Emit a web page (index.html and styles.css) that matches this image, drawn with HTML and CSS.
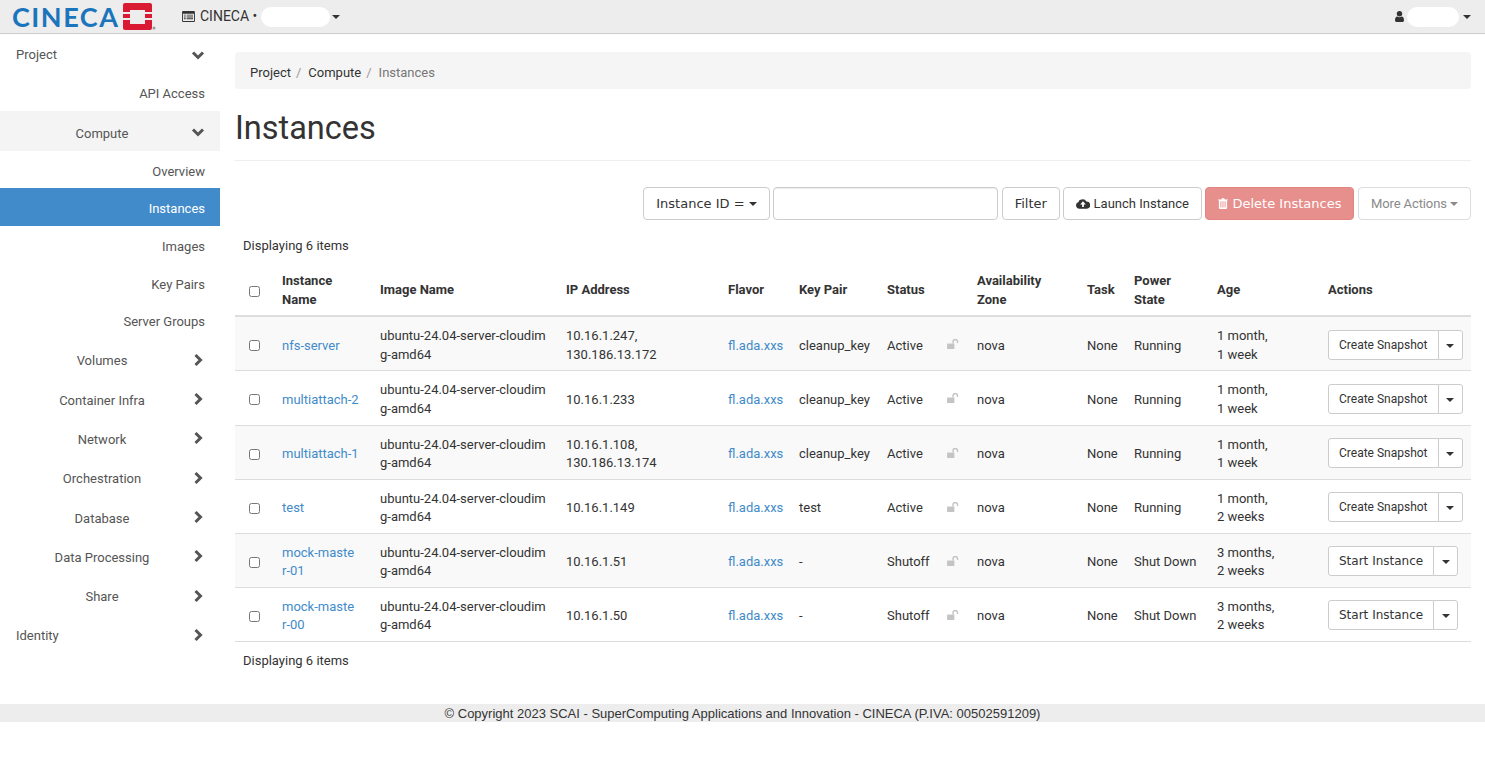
FILE: index.html
```html
<!DOCTYPE html>
<html lang="en">

<head>
    <meta charset="UTF-8">
    <title>Instances - OpenStack Dashboard</title>
    <link rel="stylesheet" href="styles.css">
</head>

<body>

    <nav class="topbar">
        <a class="brand" href="#">
            <span class="brand-name">CINECA</span>
            <svg class="brand-mark" viewBox="0 0 33 28" width="33" height="28">
                <path fill="#da1a32" d="M2 0h25a2 2 0 0 1 2 2v7h-7V7H7v2H0V2a2 2 0 0 1 2-2z" />
                <path fill="#da1a32" d="M0 17h7v4h15v-4h7v8a2 2 0 0 1-2 2H2a2 2 0 0 1-2-2z" />
                <rect fill="#da1a32" x="0" y="11" width="7" height="4" />
                <rect fill="#da1a32" x="22" y="11" width="7" height="4" />
                <circle fill="#999" cx="31" cy="25" r="1.500" />
            </svg>
        </a>
        <div class="project-menu">
            <svg class="icon" viewBox="0 0 14 12" width="13" height="11">
                <path fill="#333" d="M1 0h12a1 1 0 0 1 1 1v10a1 1 0 0 1-1 1H1a1 1 0 0 1-1-1V1a1 1 0 0 1 1-1zm0 3v8h12V3zm1 1h2v1H2zm3 0h7v1H5zM2 6h2v1H2zm3 0h7v1H5zM2 8h2v1H2zm3 0h7v1H5z" />
            </svg>
            <span class="project-label">CINECA &bull;</span>
            <span class="redacted project-name"></span>
            <span class="caret"></span>
        </div>
        <div class="user-menu">
            <svg class="icon" viewBox="0 0 10 12" width="9" height="11">
                <circle cx="5" cy="3" r="3" fill="#333" />
                <path fill="#333" d="M0 10.500C0 7.500 1 6 2.600 6c.6.5 1.400.8 2.400.8S6.800 6.500 7.400 6C9 6 10 7.500 10 10.500 10 11.500 9.300 12 8.500 12h-7C.7 12 0 11.500 0 10.500z" />
            </svg>
            <span class="redacted user-name"></span>
            <span class="caret"></span>
        </div>
    </nav>

    <div class="page">
        <aside class="sidebar">
            <a class="nav-row level-1 h-project" href="#"><span>Project</span><svg class="chev" viewBox="0 0 14 14"><path d="M2 4.500l5 5 5-5" /></svg></a>
            <a class="nav-row level-3 h-api" href="#"><span>API Access</span></a>
            <a class="nav-row level-2 open" href="#"><span>Compute</span><svg class="chev" viewBox="0 0 14 14"><path d="M2 4.500l5 5 5-5" /></svg></a>
            <a class="nav-row level-3" href="#"><span>Overview</span></a>
            <a class="nav-row level-3 active" href="#"><span>Instances</span></a>
            <a class="nav-row level-3" href="#"><span>Images</span></a>
            <a class="nav-row level-3" href="#"><span>Key Pairs</span></a>
            <a class="nav-row level-3" href="#"><span>Server Groups</span></a>
            <a class="nav-row level-2" href="#"><span>Volumes</span><svg class="chev" viewBox="0 0 14 14"><path d="M4.500 2l5 5-5 5" /></svg></a>
            <a class="nav-row level-2" href="#"><span>Container Infra</span><svg class="chev" viewBox="0 0 14 14"><path d="M4.500 2l5 5-5 5" /></svg></a>
            <a class="nav-row level-2" href="#"><span>Network</span><svg class="chev" viewBox="0 0 14 14"><path d="M4.500 2l5 5-5 5" /></svg></a>
            <a class="nav-row level-2" href="#"><span>Orchestration</span><svg class="chev" viewBox="0 0 14 14"><path d="M4.500 2l5 5-5 5" /></svg></a>
            <a class="nav-row level-2" href="#"><span>Database</span><svg class="chev" viewBox="0 0 14 14"><path d="M4.500 2l5 5-5 5" /></svg></a>
            <a class="nav-row level-2" href="#"><span>Data Processing</span><svg class="chev" viewBox="0 0 14 14"><path d="M4.500 2l5 5-5 5" /></svg></a>
            <a class="nav-row level-2" href="#"><span>Share</span><svg class="chev" viewBox="0 0 14 14"><path d="M4.500 2l5 5-5 5" /></svg></a>
            <a class="nav-row level-1" href="#"><span>Identity</span><svg class="chev" viewBox="0 0 14 14"><path d="M4.500 2l5 5-5 5" /></svg></a>
        </aside>

        <main class="content">
            <ol class="breadcrumb">
                <li><a href="#">Project</a></li>
                <li><a href="#">Compute</a></li>
                <li class="current">Instances</li>
            </ol>

            <h1 class="page-title">Instances</h1>

            <div class="actions-bar">
                <button class="btn btn-sys" type="button">Instance ID = <span class="caret"></span></button>
                <input class="filter-input" type="text">
                <button class="btn btn-sys" type="button">Filter</button>
                <a class="btn" href="#">
                    <svg class="icon" viewBox="0 0 16 12" width="14" height="11">
                        <path fill="#333" fill-rule="evenodd" d="M4 12a4 4 0 0 1-1.200-7.800A3.800 3.800 0 0 1 6.500 1.500 4.600 4.600 0 0 1 11.800 3.800 4 4 0 0 1 12.500 12zM8 3.500L4.800 7H7v3h2V7h2.200z" />
                    </svg>
                    Launch Instance
                </a>
                <button class="btn btn-sys btn-danger" type="button">
                    <svg class="icon" viewBox="0 0 11 12" width="10" height="11">
                        <path fill="#fff" fill-rule="evenodd" d="M3.500 1.500L4.200.3h2.600l.7 1.200H11v1H10v8.300c0 .7-.5 1.200-1 1.200H2c-.5 0-1-.5-1-1.200V2.500H0v-1zM2.700 3.500v7h1v-7zm2.300 0v7h1v-7zm2.300 0v7h1v-7z" />
                    </svg>
                    Delete Instances
                </button>
                <a class="btn btn-muted" href="#">More Actions <span class="caret"></span></a>
            </div>

            <div class="count-line top">Displaying 6 items</div>

            <table class="instances">
                <colgroup>
                    <col class="c-check">
                    <col class="c-name">
                    <col class="c-image">
                    <col class="c-ip">
                    <col class="c-flavor">
                    <col class="c-key">
                    <col class="c-status">
                    <col class="c-lock">
                    <col class="c-az">
                    <col class="c-task">
                    <col class="c-power">
                    <col class="c-age">
                    <col class="c-actions">
                </colgroup>
                <thead>
                    <tr>
                        <th><input type="checkbox"></th>
                        <th>Instance Name</th>
                        <th>Image Name</th>
                        <th>IP Address</th>
                        <th>Flavor</th>
                        <th>Key Pair</th>
                        <th colspan="2">Status</th>
                        <th>Availability Zone</th>
                        <th>Task</th>
                        <th>Power State</th>
                        <th>Age</th>
                        <th>Actions</th>
                    </tr>
                </thead>
                <tbody id="rows"></tbody>
            </table>

            <div class="count-line bottom">Displaying 6 items</div>
        </main>
    </div>

    <footer class="copyright">&copy; Copyright 2023 SCAI - SuperComputing Applications and Innovation - CINECA (P.IVA: 00502591209)</footer>

    <script>
        const instances = [
            ['nfs-server', '10.16.1.247,<br>130.186.13.172', 'cleanup_key', 'Active', 'Running', '1 month,<br>1 week', 'Create Snapshot'],
            ['multiattach-2', '10.16.1.233', 'cleanup_key', 'Active', 'Running', '1 month,<br>1 week', 'Create Snapshot'],
            ['multiattach-1', '10.16.1.108,<br>130.186.13.174', 'cleanup_key', 'Active', 'Running', '1 month,<br>1 week', 'Create Snapshot'],
            ['test', '10.16.1.149', 'test', 'Active', 'Running', '1 month,<br>2 weeks', 'Create Snapshot'],
            ['mock-maste<br>r-01', '10.16.1.51', '-', 'Shutoff', 'Shut Down', '3 months,<br>2 weeks', 'Start Instance'],
            ['mock-maste<br>r-00', '10.16.1.50', '-', 'Shutoff', 'Shut Down', '3 months,<br>2 weeks', 'Start Instance']
        ];

        const lockIcon = '<svg class="lock" viewBox="0 0 13 11" width="12" height="10"><path fill="#c4c4c4" d="M0 5h8v6H0z"/><path fill="none" stroke="#c4c4c4" stroke-width="1.500" d="M6.500 5V3a2.500 2.500 0 0 1 5 0v1.500"/></svg>';

        document.getElementById('rows').innerHTML = instances.map((row) => {
            const mainClass = row[6] === 'Start Instance' ? 'btn-sys' : 'btn-small';
            return `<tr>
                <td><input type="checkbox"></td>
                <td class="breakable"><a href="#">${row[0]}</a></td>
                <td class="breakable">ubuntu-24.04-server-cloudimg-amd64</td>
                <td>${row[1]}</td>
                <td><a href="#">fl.ada.xxs</a></td>
                <td>${row[2]}</td>
                <td>${row[3]}</td>
                <td>${lockIcon}</td>
                <td>nova</td>
                <td>None</td>
                <td>${row[4]}</td>
                <td>${row[5]}</td>
                <td><div class="split"><button class="btn ${mainClass}" type="button">${row[6]}</button><button class="btn split-toggle" type="button"><span class="caret"></span></button></div></td>
            </tr>`;
        }).join('');
    </script>

</body>

</html>
```

FILE: styles.css
```css
* {
    box-sizing: border-box;
}

body {
    margin: 0;
    font-family: Roboto, "Liberation Sans", sans-serif;
    font-size: 13px;
    line-height: 1.42857;
    color: #333;
    background-color: #fff;
}

a {
    color: #428bca;
    text-decoration: none;
}

.caret {
    display: inline-block;
    width: 0;
    height: 0;
    margin-left: 2px;
    vertical-align: middle;
    border-top: 4px solid;
    border-right: 4px solid transparent;
    border-left: 4px solid transparent;
}

.icon {
    vertical-align: -1px;
}

/* top bar */

.topbar {
    display: flex;
    align-items: center;
    height: 34px;
    background-color: #ededed;
    border-bottom: 1px solid #ccc;
}

.brand {
    display: flex;
    align-items: center;
    width: 182px;
    padding-left: 12px;
    height: 33px;
}

.brand-name {
    width: 111px;
    font-family: Lato, sans-serif;
    font-size: 27px;
    font-weight: 700;
    line-height: 30px;
    letter-spacing: 1.500px;
    color: #1b75bc;
}

.project-menu {
    display: flex;
    align-items: center;
    gap: 4px;
}

.project-menu .icon {
    margin-right: 1px;
}

.project-label {
    font-size: 14px;
}

.redacted {
    display: block;
    height: 20px;
    background-color: #fff;
    border-radius: 10px;
}

.project-name {
    width: 69px;
}

.project-menu .caret {
    margin-left: -2px;
}

.user-menu {
    display: flex;
    align-items: center;
    gap: 3px;
    margin-left: auto;
    padding-right: 14px;
}

.user-name {
    width: 52px;
}

.user-menu .caret {
    margin-left: 1px;
}

/* sidebar and content */

.page {
    display: flex;
    align-items: flex-start;
    min-height: 670px;
}

.sidebar {
    flex: none;
    width: 220px;
}

.nav-row {
    display: flex;
    align-items: center;
    height: 39.300px;
    padding: 0 15px 0 16px;
    color: #555;
}

.nav-row span {
    flex: 1;
    padding-top: 5px;
}

.h-project {
    height: 39.700px;
}

.h-project span {
    padding-top: 2px;
}

.h-api {
    height: 38.700px;
}

.h-api span {
    padding-top: 3px;
}

.level-2 span {
    padding-top: 6px;
    text-align: center;
}

.level-3 {
    height: 37.700px;
}

.level-3 span {
    text-align: right;
}

.nav-row.open {
    background-color: #f4f4f4;
}

.nav-row.active {
    background-color: #428bca;
    color: #fff;
}

.chev {
    flex: none;
    width: 14px;
    height: 14px;
    margin-top: 2px;
    margin-left: 3px;
}

.chev path {
    fill: none;
    stroke: #555;
    stroke-width: 3;
}

.content {
    flex: 1;
    min-width: 0;
    padding: 18px 14px 0 15px;
}

.breadcrumb {
    display: flex;
    margin: 0;
    padding: 12px 15px 6px;
    list-style: none;
    background-color: #f5f5f5;
    border-radius: 4px;
}

.breadcrumb a {
    color: #333;
}

.breadcrumb li + li::before {
    content: "/";
    padding: 0 7px 0 5px;
    color: #999;
}

.breadcrumb .current {
    color: #777;
}

.page-title {
    margin: 19px 0 26px;
    padding-bottom: 12px;
    font-size: 32.500px;
    font-weight: 400;
    line-height: 40px;
    border-bottom: 1px solid #eee;
}

/* filter and action buttons */

.actions-bar {
    display: flex;
    justify-content: flex-end;
    gap: 3.500px;
}

.btn {
    display: inline-block;
    height: 33px;
    padding: 6px 12px;
    font-family: Roboto, "Liberation Sans", sans-serif;
    font-size: 13px;
    line-height: 19px;
    color: #333;
    white-space: nowrap;
    background-color: #fff;
    border: 1px solid #ccc;
    border-radius: 4px;
}

.btn .caret {
    margin-left: 0;
}

.btn-sys {
    font-family: "DejaVu Sans", sans-serif;
}

.btn-danger {
    color: #fff;
    background-color: #e68f8c;
    border-color: #e38481;
}

.btn-muted {
    color: #8a8a8a;
    letter-spacing: -0.100px;
    border-color: #ddd;
}

.filter-input {
    width: 225px;
    height: 33px;
    padding: 6px 12px;
    border: 1px solid #ccc;
    border-radius: 4px;
    box-shadow: inset 0 1px 1px rgba(0, 0, 0, 0.075);
}

.count-line {
    padding-left: 8px;
}

.count-line.top {
    margin-top: 17px;
    margin-bottom: 7px;
}

.count-line.bottom {
    margin-top: 10px;
}

/* instances table */

.instances {
    width: 100%;
    table-layout: fixed;
    border-collapse: collapse;
}

.c-check { width: 39px; }
.c-name { width: 98px; }
.c-image { width: 186px; }
.c-ip { width: 162px; }
.c-flavor { width: 71px; }
.c-key { width: 88px; }
.c-status { width: 60px; }
.c-lock { width: 30px; }
.c-az { width: 110px; }
.c-task { width: 47px; }
.c-power { width: 83px; }
.c-age { width: 111px; }

.instances th,
.instances td {
    padding: 10px 8px 6px;
    vertical-align: middle;
    text-align: left;
}

.instances th {
    font-weight: 700;
    border-bottom: 2px solid #ddd;
}

.instances td {
    border-bottom: 1px solid #ddd;
}

.instances tbody tr:nth-child(odd) {
    background-color: #f9f9f9;
}

.instances input[type="checkbox"] {
    display: block;
    width: 11px;
    height: 11px;
    margin: 0 0 0 6px;
}

.instances th input[type="checkbox"] {
    margin-top: 2px;
}

.breakable {
    word-break: break-all;
}

.lock {
    display: block;
    margin-top: -3px;
}

.split {
    display: inline-flex;
    margin-top: -2px;
    vertical-align: middle;
}

.split .btn {
    height: 30px;
    padding: 5px 10px;
    font-size: 12px;
    line-height: 18px;
    border-radius: 3px 0 0 3px;
}

.split .split-toggle {
    width: 25px;
    margin-left: -1px;
    padding: 0;
    border-radius: 0 3px 3px 0;
}

/* footer */

.copyright {
    height: 18px;
    font-family: "Liberation Sans", sans-serif;
    font-size: 13px;
    line-height: 20px;
    text-align: center;
    background-color: #ededed;
}
```
